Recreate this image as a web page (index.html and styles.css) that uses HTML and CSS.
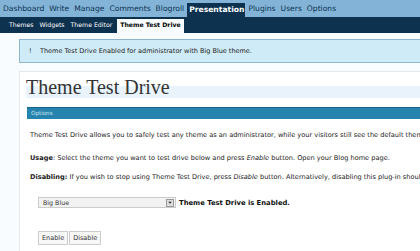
FILE: index.html
```html
<!DOCTYPE html>
<html>
<head>
<meta charset="utf-8">
<link rel="stylesheet" href="styles.css">
</head>
<body>
<div class="menu">
  <a class="mi">Dashboard</a>
  <a class="mi">Write</a>
  <a class="mi">Manage</a>
  <a class="mi">Comments</a>
  <a class="mi">Blogroll</a>
  <a class="mi active">Presentation</a>
  <a class="mi">Plugins</a>
  <a class="mi">Users</a>
  <a class="mi">Options</a>
</div>
<div class="submenu">
  <a class="si">Themes</a>
  <a class="si">Widgets</a>
  <a class="si">Theme Editor</a>
  <a class="si current">Theme Test Drive</a>
</div>
<div class="page">
  <div class="notice"><span class="bang">!</span>Theme Test Drive Enabled for administrator with Big Blue theme.</div>
  <div class="wrap">
    <h2 class="title">Theme Test Drive</h2>
    <div class="optbar">Options</div>
    <p class="txt p1">Theme Test Drive allows you to safely test any theme as an administrator, while your visitors still see the default theme.</p>
    <p class="txt p2"><b>Usage</b>: Select the theme you want to test drive below and press <i>Enable</i> button. Open your Blog home page.</p>
    <p class="txt p3"><b>Disabling:</b> If you wish to stop using Theme Test Drive, press <i>Disable</i> button. Alternatively, disabling this plug-in should also work.</p>
    <div class="selrow">
      <div class="select"><span class="selval">Big Blue</span><span class="arrow"><svg width="7" height="7" viewBox="0 0 7 7"><path d="M1.5 2.5 L5.5 2.5 L3.5 5 Z" fill="#222"/></svg></span></div>
      <b class="status">Theme Test Drive is Enabled.</b>
    </div>
    <div class="btns">
      <span class="btn">Enable</span><span class="btn">Disable</span>
    </div>
  </div>
</div>
</body>
</html>
```

FILE: styles.css
```css
html, body {
  margin: 0;
  padding: 0;
  background: #f9fcfe;
  font-family: "DejaVu Sans", sans-serif;
  overflow: hidden;
  width: 420px;
  height: 251px;
}
.menu {
  height: 17px;
  background: #83b4d8;
  display: flex;
  align-items: flex-end;
  padding-left: 1px;
  white-space: nowrap;
}
.mi {
  font-size: 7.6px;
  color: #0d324f;
  padding: 0 3px 3px 2px;
  line-height: 11px;
}
.mi.active {
  background: #0d324f;
  color: #fff;
  font-weight: bold;
  padding: 0 1px 3px 2px;
  margin: 0 1px 0 0;
  height: 14px;
  line-height: 14px;
  box-sizing: border-box;
}
.submenu {
  height: 16px;
  background: #0d324f;
  display: flex;
  align-items: flex-end;
  padding-left: 6px;
  white-space: nowrap;
}
.si {
  font-size: 6.2px;
  color: #fff;
  padding: 0 3px 4px 3px;
  line-height: 8px;
}
.si.current {
  background: #f9fcfe;
  color: #000;
  font-weight: bold;
  padding: 2px 3px 4px 3px;
  margin-left: 2px;
}
.page {
  padding-top: 6px;
}
.notice {
  margin-left: 19px;
  background: #cfebf7;
  border: 1px solid #8fb6cb;
  border-right: none;
  height: 22px;
  line-height: 22px;
  font-size: 6.5px;
  color: #222;
  padding-left: 9px;
  white-space: nowrap;
}
.bang {
  display: inline-block;
  width: 11px;
}
.wrap {
  margin: 8px 0 0 19px;
  background: #fff;
  border-left: 1px solid #e4e8eb;
  border-top: 1px solid #e4e8eb;
  padding: 6px 0 0 6px;
  height: 173px;
  overflow: hidden;
}
.title {
  margin: 0;
  font-family: "Liberation Serif", serif;
  font-weight: normal;
  font-size: 20px;
  color: #333;
  line-height: 18px;
  height: 20px;
  background: linear-gradient(to bottom, transparent 8px, #e8f3fb 8px);
  white-space: nowrap;
}
.optbar {
  margin: 9px 0 0 1px;
  background: #2583ad;
  border-top: 1px solid #16628a;
  height: 11px;
  line-height: 11px;
  color: #cfe6f2;
  font-size: 5.6px;
  padding-left: 4px;
}
.txt {
  margin: 0 0 0 4px;
  font-size: 6.6px;
  line-height: 9px;
  color: #222;
  white-space: nowrap;
}
.p1 { margin-top: 12px; }
.p2 { margin-top: 14px; }
.p3 { margin-top: 10px; }
.selrow {
  display: flex;
  align-items: center;
  margin: 15px 0 0 12px;
}
.select {
  width: 136px;
  height: 9px;
  border: 1px solid #ccc;
  background: #f2f2f2;
  display: flex;
  align-items: center;
  justify-content: space-between;
  font-size: 6.3px;
  color: #333;
}
.selval { padding-left: 4px; }
.arrow {
  width: 8px;
  height: 8px;
  border: 1px solid #999;
  background: #ddd;
  margin-right: 1px;
  display: flex;
  align-items: center;
  justify-content: center;
  box-sizing: border-box;
}
.status {
  font-size: 6.8px;
  color: #111;
  margin-left: 3px;
  white-space: nowrap;
}
.btns {
  display: flex;
  gap: 1px;
  margin: 23px 0 0 12px;
}
.btn {
  border: 1px solid #ccc;
  background: #f7f7f7;
  font-size: 6.5px;
  color: #333;
  padding: 0 3px;
  height: 12px;
  line-height: 12px;
}
```
